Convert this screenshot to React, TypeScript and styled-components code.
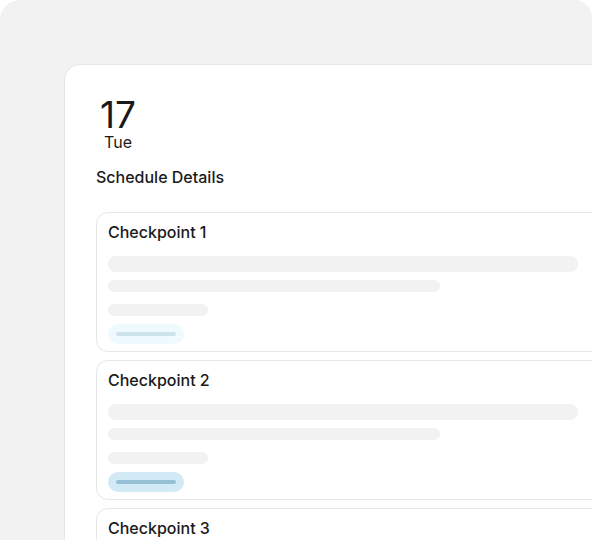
import React from "react";
import styled, { createGlobalStyle } from "styled-components";

const GlobalStyle = createGlobalStyle`
  html, body {
    margin: 0;
    padding: 0;
    background: #ffffff;
  }
  body {
    font-family: Inter, "Noto Sans", sans-serif;
    color: #1a1a1a;
  }
`;

const Panel = styled.div`
  width: 592px;
  height: 540px;
  box-sizing: border-box;
  background: #f2f2f2;
  border-radius: 20px 18px 0 0;
  padding: 64px 0 0 64px;
  overflow: hidden;
`;

const Card = styled.div`
  background: #ffffff;
  border: 1px solid #e6e6e6;
  border-right: none;
  border-bottom: none;
  border-radius: 16px 0 0 0;
  padding: 32px 0 0 31px;
  height: 600px;
  box-sizing: border-box;
  display: flex;
  flex-direction: column;
`;

const DateBlock = styled.div`
  display: inline-flex;
  flex-direction: column;
  align-items: center;
  align-self: flex-start;
  margin-left: 4px;
`;

const DayNumber = styled.div`
  font-size: 37px;
  line-height: 36px;
  font-weight: 400;
  color: #1a1a1a;
`;

const DayName = styled.div`
  font-size: 16px;
  line-height: 16px;
  font-weight: 400;
  color: #1a1a1a;
  margin-top: 1px;
`;

const SectionTitle = styled.div`
  margin-top: 19px;
  font-size: 16px;
  line-height: 16px;
  font-weight: 500;
  color: #1a1a1a;
`;

const List = styled.div`
  margin-top: 27px;
  display: flex;
  flex-direction: column;
  gap: 8px;
`;

const CheckpointCard = styled.div`
  width: 520px;
  box-sizing: border-box;
  border: 1px solid #e6e6e6;
  border-radius: 12px;
  padding: 11px 11px 7px;
  display: flex;
  flex-direction: column;
`;

const CheckpointTitle = styled.div`
  font-size: 16px;
  line-height: 16px;
  font-weight: 500;
  color: #1a1a1a;
  margin-bottom: 16px;
`;

const Bar = styled.div<{ $w: number; $h: number; $mt: number }>`
  width: ${(p) => p.$w}px;
  height: ${(p) => p.$h}px;
  margin-top: ${(p) => p.$mt}px;
  border-radius: ${(p) => p.$h / 2}px;
  background: #f2f2f2;
`;

const Pill = styled.div<{ $active: boolean }>`
  margin-top: 8px;
  width: 76px;
  height: 20px;
  border-radius: 10px;
  background: ${(p) => (p.$active ? "#d2e9f6" : "#effafe")};
  display: flex;
  align-items: center;
  justify-content: center;
`;

const PillLine = styled.div<{ $active: boolean }>`
  width: 60px;
  height: 4px;
  border-radius: 2px;
  background: ${(p) => (p.$active ? "#95bfd5" : "#cde3ec")};
`;

const checkpoints = [
  { name: "Checkpoint 1", active: false },
  { name: "Checkpoint 2", active: true },
  { name: "Checkpoint 3", active: false },
];

export default function App() {
  return (
    <>
      <GlobalStyle />
      <Panel>
        <Card>
          <DateBlock>
            <DayNumber>17</DayNumber>
            <DayName>Tue</DayName>
          </DateBlock>
          <SectionTitle>Schedule Details</SectionTitle>
          <List>
            {checkpoints.map((c) => (
              <CheckpointCard key={c.name}>
                <CheckpointTitle>{c.name}</CheckpointTitle>
                <Bar $w={470} $h={16} $mt={0} />
                <Bar $w={332} $h={12} $mt={8} />
                <Bar $w={100} $h={12} $mt={12} />
                <Pill $active={c.active}>
                  <PillLine $active={c.active} />
                </Pill>
              </CheckpointCard>
            ))}
          </List>
        </Card>
      </Panel>
    </>
  );
}
